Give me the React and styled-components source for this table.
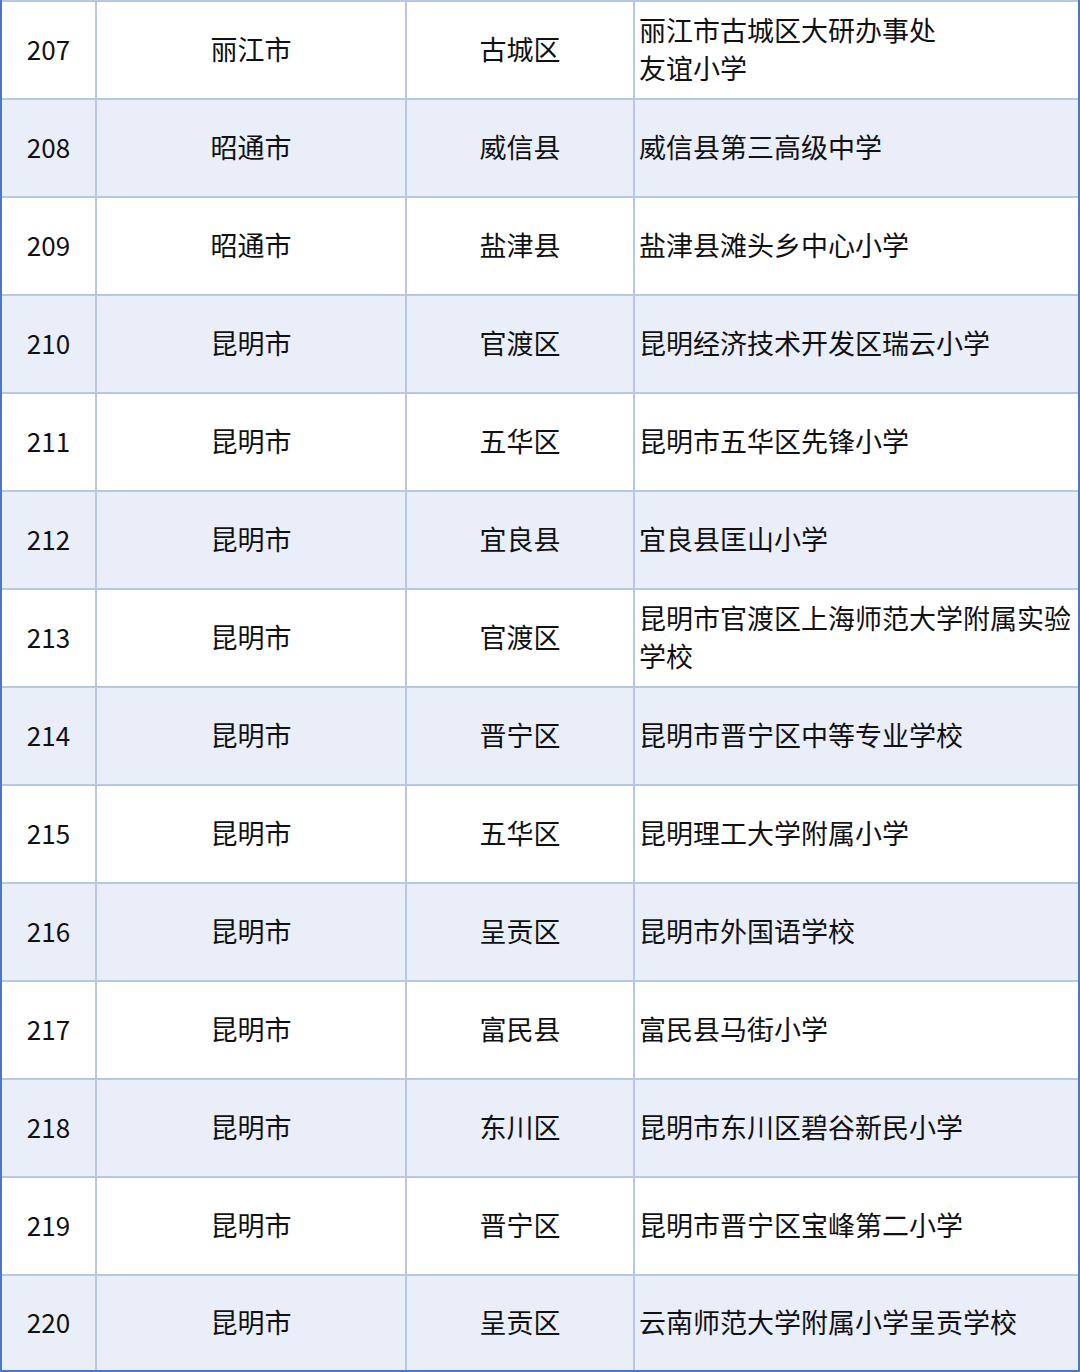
import React from 'react'
import styled, { createGlobalStyle } from 'styled-components'

const rows = [
  ['207', '丽江市', '古城区', '丽江市古城区大研办事处\n友谊小学'],
  ['208', '昭通市', '威信县', '威信县第三高级中学'],
  ['209', '昭通市', '盐津县', '盐津县滩头乡中心小学'],
  ['210', '昆明市', '官渡区', '昆明经济技术开发区瑞云小学'],
  ['211', '昆明市', '五华区', '昆明市五华区先锋小学'],
  ['212', '昆明市', '宜良县', '宜良县匡山小学'],
  ['213', '昆明市', '官渡区', '昆明市官渡区上海师范大学附属实验学校'],
  ['214', '昆明市', '晋宁区', '昆明市晋宁区中等专业学校'],
  ['215', '昆明市', '五华区', '昆明理工大学附属小学'],
  ['216', '昆明市', '呈贡区', '昆明市外国语学校'],
  ['217', '昆明市', '富民县', '富民县马街小学'],
  ['218', '昆明市', '东川区', '昆明市东川区碧谷新民小学'],
  ['219', '昆明市', '晋宁区', '昆明市晋宁区宝峰第二小学'],
  ['220', '昆明市', '呈贡区', '云南师范大学附属小学呈贡学校'],
]

const GlobalStyle = createGlobalStyle`
  html, body {
    margin: 0;
    padding: 0;
    background: #ffffff;
  }
  * { box-sizing: border-box; }
`

const Sheet = styled.div`
  width: 1080px;
  font-family: "Noto Sans CJK SC", "Noto Sans", sans-serif;
  color: #111111;
  border-left: 2px solid #4a78c6;
  border-right: 2px solid #4a78c6;
  border-bottom: 2px solid #4a78c6;
`

const Row = styled.div`
  display: grid;
  grid-template-columns: 93px 310px 228px 445px;
  height: 98px;
  border-top: 2px solid #b7c7e6;
  background: ${p => (p.$shaded ? '#eaeef9' : '#ffffff')};

  &:last-child {
    height: 96px;
  }
`

const Cell = styled.div`
  display: flex;
  align-items: center;
  justify-content: ${p => (p.$left ? 'flex-start' : 'center')};
  padding: 0 ${p => (p.$left ? '4px' : '0')};
  border-left: ${p => (p.$first ? 'none' : '2px solid #b7c7e6')};
  font-size: ${p => (p.$num ? '26px' : '27px')};
  line-height: 38px;
  white-space: pre-line;
  word-break: break-all;
  padding-bottom: 2px;
`

const App = () => {
  return (
    <>
      <GlobalStyle />
      <Sheet>
        {rows.map((r, i) => (
          <Row key={r[0]} $shaded={i % 2 === 1}>
            <Cell $first $num>{r[0]}</Cell>
            <Cell>{r[1]}</Cell>
            <Cell>{r[2]}</Cell>
            <Cell $left>{r[3]}</Cell>
          </Row>
        ))}
      </Sheet>
    </>
  )
}

export default App
